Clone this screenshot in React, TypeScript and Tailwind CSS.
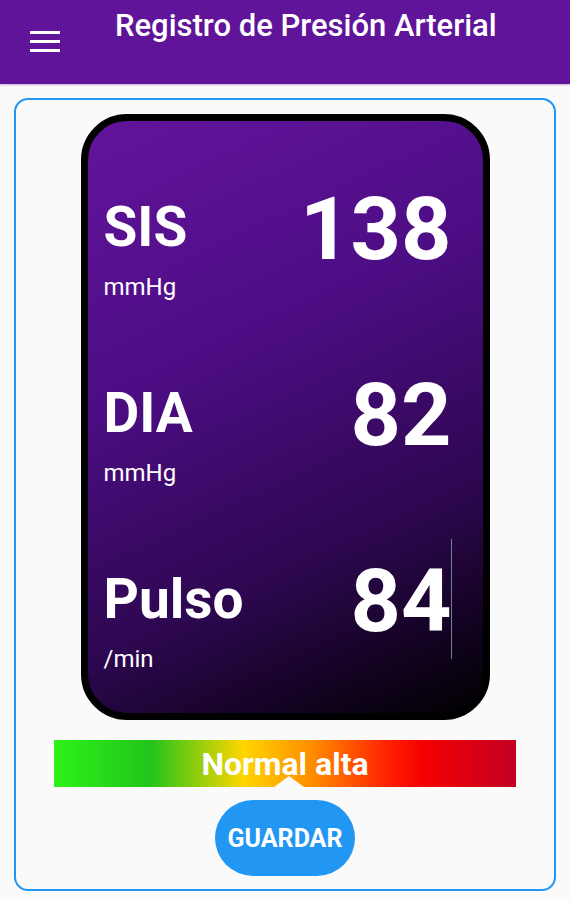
import React from 'react';

const font = { fontFamily: 'Roboto, "Liberation Sans", Arial, sans-serif' };

function Reading({
  label,
  unit,
  value,
  caret,
}: {
  label: string;
  unit: string;
  value: string;
  caret?: boolean;
}) {
  return (
    <div className="flex h-[186px] items-start justify-between">
      <div className="mt-[15px] flex flex-col">
        <span className="text-[55px] font-bold leading-none text-white">{label}</span>
        <span className="mt-[20px] text-[24px] leading-none text-white">{unit}</span>
      </div>
      <div className="relative">
        <span className="block text-[88px] font-bold leading-none text-white">{value}</span>
        {caret && (
          <span className="absolute right-0 top-[-18px] h-[120px] w-px bg-[#6f8090]" />
        )}
      </div>
    </div>
  );
}

export default function App() {
  return (
    <div className="min-h-[900px] w-[570px] bg-[#fafafa]" style={font}>
      {/* App bar */}
      <header className="flex h-[84px] items-start bg-[#60149a] pl-[30px] shadow-[0_1px_2px_rgba(96,20,154,0.35)]">
        <div className="mt-[31px] flex w-[30px] flex-col gap-[6px]">
          <span className="h-[3px] w-full bg-white" />
          <span className="h-[3px] w-full bg-white" />
          <span className="h-[3px] w-full bg-white" />
        </div>
        <h1 className="ml-[55px] mt-[10px] text-[31px] font-medium leading-none text-white">
          Registro de Presión Arterial
        </h1>
      </header>

      <main className="px-[14px] pt-[14px]">
        <div className="flex flex-col items-center rounded-[14px] border-2 border-[#2196f3] pb-[13px] pt-[14px]">
          {/* Display */}
          <div className="h-[606px] w-[409px] rounded-[46px] border-[7px] border-black bg-[linear-gradient(155deg,#62149c_0%,#4c0d83_38%,#2d0750_70%,#000000_100%)] pl-[16px] pr-[31px] pt-[64px]">
            <Reading label="SIS" unit="mmHg" value="138" />
            <Reading label="DIA" unit="mmHg" value="82" />
            <Reading label="Pulso" unit="/min" value="84" caret />
          </div>

          {/* Category bar */}
          <div className="relative mt-[20px] flex h-[47px] w-[462px] items-center justify-center bg-[linear-gradient(90deg,#2df21a_0%,#22c41a_21%,#ffd600_41%,#ff8c00_56%,#ff2200_72%,#f40000_80%,#c20022_100%)]">
            <span className="text-[32px] font-bold leading-none text-white">Normal alta</span>
            <span className="absolute bottom-0 left-[220px] h-0 w-0 border-b-[11px] border-l-[15px] border-r-[15px] border-b-[#fafafa] border-l-transparent border-r-transparent" />
          </div>

          <button className="mt-[13px] flex h-[76px] w-[140px] items-center justify-center rounded-full bg-[#2196f3] text-[25px] font-bold leading-none text-white">
            GUARDAR
          </button>
        </div>
      </main>
    </div>
  );
}
